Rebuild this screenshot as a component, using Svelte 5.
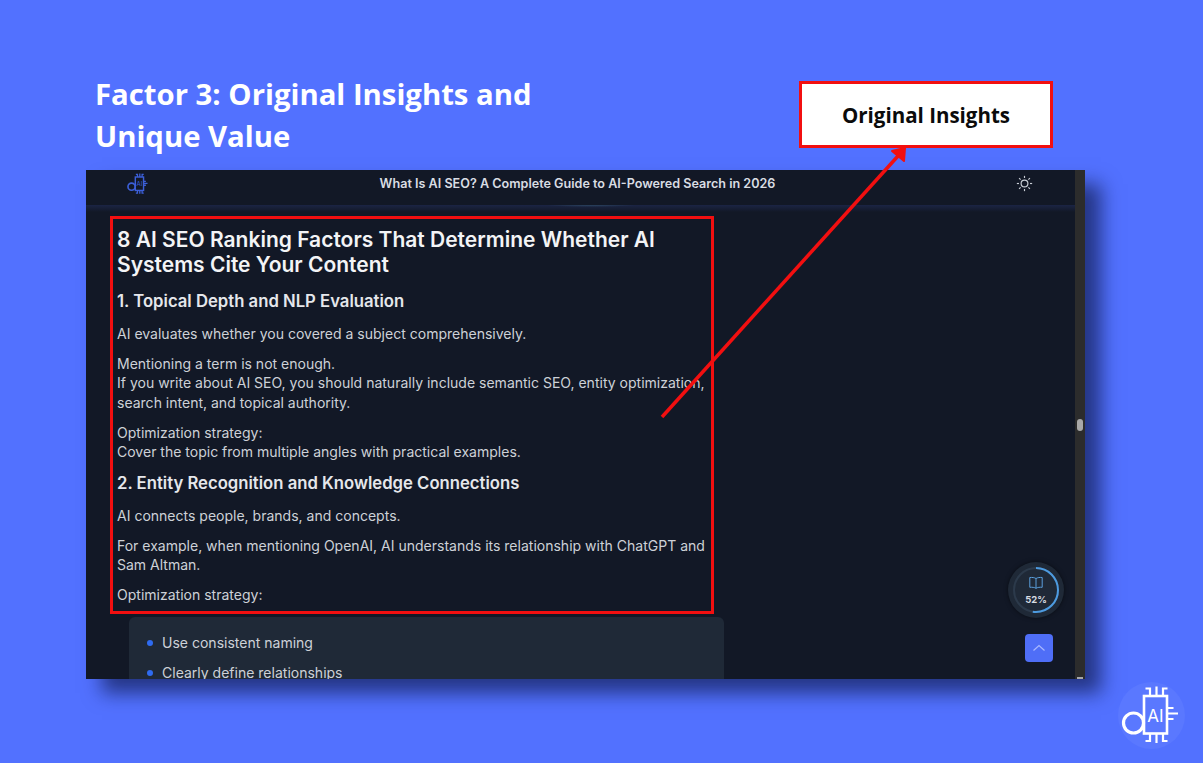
<script>
  const sunRays = [0, 45, 90, 135, 180, 225, 270, 315];
</script>

{#snippet logo(color, sw)}
  <svg class="logo-mark" viewBox="0 0 67 67" fill="none" stroke={color} stroke-width={sw}>
    <circle cx="15.500" cy="41" r="10" stroke-width={sw + 1} />
    <rect x="26" y="14" width="23" height="37.500" stroke-width={sw + 0.4} />
    <path d="M32 14V6.500h-4.500M38.500 14V4.500M45 14V6.500h4.500" />
    <path d="M32 51v8h-4.500M38.500 51v10M45 51v8h4.500" />
    <path d="M49 26h6.500M49 31.500h11M49 37h6.500" />
    <text x="37.500" y="39.500" text-anchor="middle" font-size="17" fill={color} stroke="none">AI</text>
  </svg>
{/snippet}

<div class="slide">
  <header class="top">
    <h1>Factor 3: Original Insights and<br />Unique Value</h1>
    <div class="callout">Original Insights</div>
  </header>

  <section class="shot">
    <div class="page">
      <div class="bar">
        <span class="bar-logo">{@render logo("#3c5fd8", 3.600)}</span>
        <span class="bar-title">What Is AI SEO? A Complete Guide to AI-Powered Search in 2026</span>
        <svg class="sun" viewBox="0 0 16 16" fill="none" stroke="#c9ced6" stroke-width="1.100">
          <circle cx="8" cy="8" r="3.200" />
          {#each sunRays as a}
            <line x1="8" y1="2.800" x2="8" y2="0.800" transform="rotate({a} 8 8)" />
          {/each}
        </svg>
      </div>

      <div class="article">
        <div class="marked">
          <h2>8 AI SEO Ranking Factors That Determine Whether AI Systems Cite Your Content</h2>
          <h3>1. Topical Depth and NLP Evaluation</h3>
          <p>AI evaluates whether you covered a subject comprehensively.</p>
          <p>Mentioning a term is not enough.<br />If you write about AI SEO, you should naturally include semantic SEO, entity optimization, search intent, and topical authority.</p>
          <p>Optimization strategy:<br />Cover the topic from multiple angles with practical examples.</p>
          <h3>2. Entity Recognition and Knowledge Connections</h3>
          <p>AI connects people, brands, and concepts.</p>
          <p>For example, when mentioning OpenAI, AI understands its relationship with ChatGPT and Sam Altman.</p>
          <p class="last">Optimization strategy:</p>
        </div>
        <ul class="card">
          <li>Use consistent naming</li>
          <li>Clearly define relationships</li>
        </ul>
      </div>

      <div class="progress">
        <svg viewBox="0 0 54 54" class="ring" fill="none">
          <circle cx="27" cy="27" r="22" stroke="#2c3a4b" stroke-width="2" />
          <circle cx="27" cy="27" r="22" stroke="#4d9be0" stroke-width="2" stroke-dasharray="72 139" transform="rotate(-90 27 27)" />
        </svg>
        <svg class="book" viewBox="0 0 16 16" fill="none" stroke="#5a9fdc" stroke-width="1">
          <path d="M8 3.500C6.500 2.500 4 2.300 1.800 2.500v9.800c2.200-.2 4.700 0 6.200 1 1.500-1 4-1.200 6.200-1V2.500C12 2.300 9.500 2.500 8 3.500zM8 3.500v9.800" />
        </svg>
        <span>52%</span>
      </div>

      <button class="up" aria-label="Back to top">
        <svg viewBox="0 0 16 16" fill="none" stroke="#a9b8ff" stroke-width="1.200"><path d="M2.500 10.500 8 5.500l5.500 5" /></svg>
      </button>
    </div>
    <div class="scroll">
      <i class="thumb"></i>
      <i class="end"></i>
    </div>
  </section>

  <svg class="arrow" viewBox="0 0 1203 763" fill="none">
    <line x1="662" y1="417" x2="898" y2="156" stroke="#f20f10" stroke-width="3.500" />
    <path d="M905 148 L892 151 L904 161 Z" fill="#f20f10" stroke="#f20f10" stroke-width="2" stroke-linejoin="round" />
  </svg>

  <div class="brand">{@render logo("#fff", 2.200)}</div>
</div>

<style>
  :global(body) {
    margin: 0;
    background: #5271ff;
  }

  .slide {
    position: relative;
    width: 1203px;
    height: 763px;
    overflow: hidden;
    background: #5271ff;
    font-family: Inter, "Liberation Sans", sans-serif;
  }

  .top {
    display: flex;
    justify-content: space-between;
    align-items: flex-start;
    height: 170px;
    padding: 73px 150px 0 95px;
    box-sizing: border-box;
  }

  h1 {
    margin: 0;
    font-family: "Open Sans", "Liberation Sans", sans-serif;
    font-size: 29.300px;
    font-weight: 700;
    line-height: 42px;
    color: #fff;
  }

  .callout {
    width: 254px;
    height: 67px;
    margin-top: 8px;
    box-sizing: border-box;
    border: 3px solid #f20f10;
    background: #fff;
    display: flex;
    align-items: center;
    justify-content: center;
    font-family: "Open Sans", "Liberation Sans", sans-serif;
    font-size: 20.500px;
    font-weight: 700;
    color: #0b0b0b;
  }

  .shot {
    display: flex;
    width: 999px;
    height: 509px;
    margin-left: 86px;
    box-shadow: 16px 14px 18px rgba(10, 18, 60, 0.62);
  }

  .page {
    position: relative;
    flex: 1;
    min-width: 0;
    background: #121826;
    overflow: hidden;
  }

  .bar {
    position: relative;
    height: 25px;
    padding: 1px 0 10px;
    display: flex;
    align-items: center;
    justify-content: center;
  }

  /* faint blue band under the header, brightest round the middle */
  .bar::after {
    content: "";
    position: absolute;
    left: 0;
    right: 0;
    top: 35px;
    height: 7px;
    background:
      radial-gradient(ellipse 45px 2px at 505px 0, #2c4560, transparent),
      linear-gradient(#1b2444, #121826);
  }

  .bar-title {
    font-size: 12.600px;
    font-weight: 600;
    color: #d9dde3;
    margin-right: 6px;
  }

  .bar-logo {
    position: absolute;
    left: 40px;
    top: 2px;
    width: 24px;
    height: 24px;
  }

  .logo-mark {
    display: block;
    width: 100%;
    height: 100%;
  }

  .logo-mark text {
    font-family: Inter, "Liberation Sans", sans-serif;
  }

  .sun {
    position: absolute;
    left: 930px;
    top: 5px;
    width: 17px;
    height: 17px;
  }

  .article {
    padding: 10px 0 0 24px;
    color: #cdd1d7;
    font-size: 14.030px;
    line-height: 19.500px;
  }

  .marked {
    width: 604px;
    height: 398px;
    box-sizing: border-box;
    border: 3px solid #f20f10;
    padding: 8px 0 0 4px;
  }

  h2 {
    margin: 0 0 13px;
    font-size: 21px;
    line-height: 25px;
    font-weight: 600;
    color: #f3f4f6;
  }

  h3 {
    margin: 0 0 11.500px;
    font-size: 16.700px;
    line-height: 22px;
    font-weight: 600;
    color: #e5e7eb;
  }

  p {
    margin: 0 0 10.500px;
  }

  p.last {
    margin: 0;
  }

  .card {
    list-style: none;
    width: 595px;
    height: 80px;
    margin: 3px 0 0 19px;
    padding: 16px 18px 0;
    box-sizing: border-box;
    background: #1f2937;
    border-radius: 6px 6px 0 0;
  }

  .card li {
    display: flex;
    align-items: center;
    gap: 9px;
    height: 20px;
    margin-bottom: 10px;
  }

  .card li::before {
    content: "";
    width: 6px;
    height: 6px;
    border-radius: 50%;
    background: #2f6bf0;
  }

  .progress {
    position: absolute;
    left: 922px;
    top: 392px;
    width: 56px;
    height: 56px;
    border-radius: 50%;
    background: #1f2937;
    box-shadow: 0 0 4px rgba(0, 0, 0, 0.5);
    display: flex;
    flex-direction: column;
    align-items: center;
    justify-content: center;
    color: #d8dce2;
    font-size: 9.500px;
    font-weight: 700;
    line-height: 12px;
  }

  .ring {
    position: absolute;
    inset: 1px;
  }

  .book {
    width: 16px;
    height: 16px;
    margin-bottom: 3px;
  }

  .up {
    position: absolute;
    left: 939px;
    top: 464px;
    width: 28px;
    height: 28px;
    padding: 6px;
    border: none;
    border-radius: 4px;
    background: #4f6ef7;
  }

  .up svg {
    display: block;
  }

  .scroll {
    position: relative;
    width: 10px;
    background: #2c2c2c;
  }

  .thumb {
    position: absolute;
    left: 2px;
    top: 249px;
    width: 6px;
    height: 12px;
    border-radius: 3px;
    background: #a8a8a8;
  }

  .end {
    position: absolute;
    left: 2px;
    bottom: 0;
    width: 6px;
    height: 2px;
    background: #a8a8a8;
  }

  .arrow {
    position: absolute;
    inset: 0;
    width: 1203px;
    height: 763px;
    pointer-events: none;
  }

  .brand {
    position: absolute;
    left: 1118px;
    top: 682px;
    width: 67px;
    height: 67px;
    border-radius: 50%;
    background: #5a78ff;
  }
</style>
